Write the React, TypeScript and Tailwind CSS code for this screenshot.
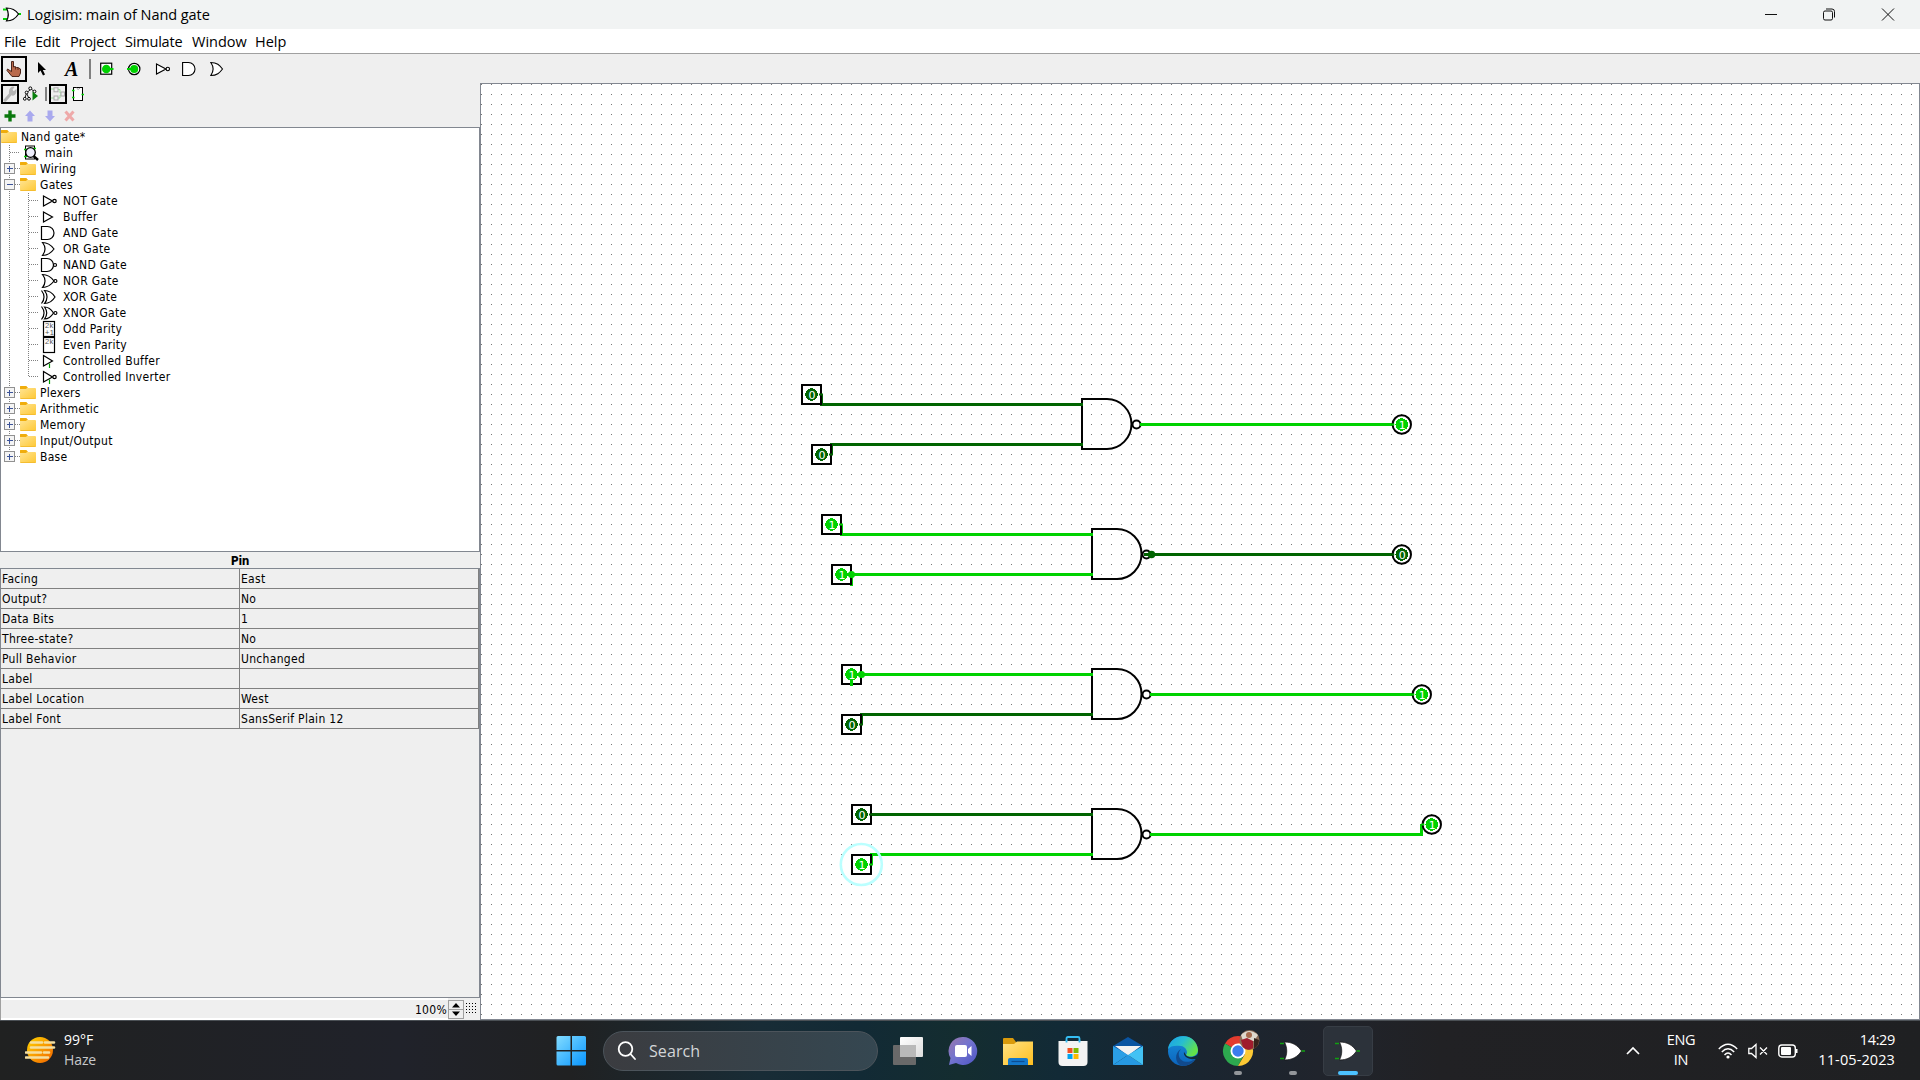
import React from "react";

const ON = "#00d200";
const OFF = "#006400";

type GateKind = "not" | "buffer" | "and" | "or" | "nand" | "nor" | "xor" | "xnor" | "odd" | "even" | "cbuf" | "cinv";

/* Component glyphs, drawn on a 16x16 grid */
function GateIcon({ kind }: { kind: GateKind }) {
  const orBody = "M1.5 1.5 C7 1.5 10 4 13 8 C10 12 7 14.5 1.5 14.5 C5 10 5 6 1.5 1.5 Z";
  return (
    <svg className="h-4 w-4 shrink-0 overflow-visible" viewBox="0 0 16 16" fill="none" stroke="#000" strokeWidth="1.2">
      {kind === "not" && (
        <>
          <path d="M2.5 3 L11.5 8 L2.5 13 Z" />
          <circle cx="13.5" cy="8" r="1.7" />
        </>
      )}
      {kind === "buffer" && <path d="M2.5 3 L11.5 8 L2.5 13 Z" />}
      {kind === "and" && <path d="M.5 1.5 H6.5 A6.5 6.5 0 0 1 6.5 14.5 H.5 Z" />}
      {kind === "or" && <path d={orBody} />}
      {kind === "nand" && (
        <>
          <path d="M.5 1.5 H6 A6.5 6.5 0 0 1 6 14.5 H.5 Z" />
          <circle cx="14" cy="8" r="1.5" />
        </>
      )}
      {kind === "nor" && (
        <>
          <path d={orBody} />
          <circle cx="14.4" cy="8" r="1.5" />
        </>
      )}
      {kind === "xor" && (
        <>
          <path d="M3.5 1.5 C9 1.5 11.5 4 14 8 C11.5 12 9 14.5 3.5 14.5 C7 10 7 6 3.5 1.5 Z" />
          <path d="M.5 1.5 C4 6 4 10 .5 14.5" />
        </>
      )}
      {kind === "xnor" && (
        <>
          <path d="M3.5 2 C8 2 10 4 12.5 8 C10 12 8 14 3.5 14 C6.5 10 6.5 6 3.5 2 Z" />
          <path d="M.5 1.5 C4 6 4 10 .5 14.5" />
          <circle cx="14.4" cy="8" r="1.5" />
        </>
      )}
      {(kind === "odd" || kind === "even") && (
        <>
          <rect x="2.5" y=".5" width="11" height="15" />
          <text x="4" y="7" fontSize="7.5" fill="#555" stroke="none" fontFamily="Liberation Sans, sans-serif">2k</text>
          {kind === "odd" && (
            <text x="4" y="14" fontSize="7.5" fill="#555" stroke="none" fontFamily="Liberation Sans, sans-serif">+1</text>
          )}
        </>
      )}
      {(kind === "cbuf" || kind === "cinv") && (
        <>
          <path d="M2.5 2.5 L11.5 8 L2.5 13 Z" />
          <path d="M8.5 10.5 V15" stroke="#00a000" />
          {kind === "cinv" && <circle cx="13.5" cy="8" r="1.7" />}
        </>
      )}
    </svg>
  );
}

function Folder() {
  return (
    <svg className="h-4 w-4 shrink-0" viewBox="0 0 16 16">
      <defs>
        <linearGradient id="folder" x1="0" y1="0" x2="1" y2="1">
          <stop offset="0" stopColor="#ffe493" />
          <stop offset="1" stopColor="#fec834" />
        </linearGradient>
      </defs>
      <path d="M0 2 Q0 1 1 1 H6 L8 3 V6 H0Z" fill="#f0ad0c" />
      <rect x="0" y="3" width="16" height="11" rx="1" fill="url(#folder)" />
      <path d="M0 4 V2 Q0 1 1 1 H6 L7.5 2.6 L6 4Z" fill="#f0ad0c" />
      <path d="M.5 13.5 H15.5" stroke="#f5bd30" />
    </svg>
  );
}

function Expander({ open, last }: { open?: boolean; last?: boolean }) {
  return (
    <svg className="h-4 w-5 shrink-0" viewBox="0 0 20 16" shapeRendering="crispEdges">
      <path d={last ? "M9.5 0 V8" : "M9.5 0 V16"} stroke="#808080" strokeDasharray="1 1" />
      <path d="M15 7.5 H20" stroke="#808080" strokeDasharray="1 1" />
      <rect x="4.5" y="2.5" width="10" height="10" fill="#f4f4f4" stroke="#919191" />
      <path d="M7 7.5 H13" stroke="#3b5399" />
      {!open && <path d="M9.5 4.5 V10.5" stroke="#3b5399" />}
    </svg>
  );
}

function ChildGuide({ last }: { last?: boolean }) {
  return (
    <svg className="h-4 w-[41px] shrink-0" viewBox="0 0 41 16" shapeRendering="crispEdges" stroke="#808080" strokeDasharray="1 1">
      <path d="M9.5 0 V16" />
      <path d={last ? "M28.5 0 V8" : "M28.5 0 V16"} />
      <path d="M29 7.5 H39" />
    </svg>
  );
}

const gates: [GateKind, string][] = [
  ["not", "NOT Gate"],
  ["buffer", "Buffer"],
  ["and", "AND Gate"],
  ["or", "OR Gate"],
  ["nand", "NAND Gate"],
  ["nor", "NOR Gate"],
  ["xor", "XOR Gate"],
  ["xnor", "XNOR Gate"],
  ["odd", "Odd Parity"],
  ["even", "Even Parity"],
  ["cbuf", "Controlled Buffer"],
  ["cinv", "Controlled Inverter"],
];

const ROW = "flex h-4 items-center leading-4 whitespace-nowrap";

function LibraryRow({ name, open, last }: { name: string; open?: boolean; last?: boolean }) {
  return (
    <div className={ROW}>
      <Expander open={open} last={last} />
      <Folder />
      <span className="ml-1">{name}</span>
    </div>
  );
}

function Explorer() {
  return (
    <div className="h-[425px] shrink-0 border border-[#828790] bg-white pt-px">
      <div className="-ml-px">
        <div className={ROW}>
          <span className="ml-px flex"><Folder /></span>
          <span className="ml-1">Nand gate*</span>
        </div>
        <div className={ROW}>
          <svg className="h-4 w-6 shrink-0" viewBox="0 0 24 16" shapeRendering="crispEdges" stroke="#808080" strokeDasharray="1 1">
            <path d="M9.5 0 V16 M10 7.5 H20" />
          </svg>
          <svg className="h-4 w-4 shrink-0" viewBox="0 0 16 16">
            <rect x="1.5" y="1" width="9" height="13" fill="#fff" stroke="#000" />
            <path d="M0 4.5 H3 M0 11.5 H3 M9 3.5 H12" stroke={ON} strokeWidth="1.5" />
            <circle cx="6.5" cy="7.5" r="4.8" fill="#eeeefc" stroke="#000" strokeWidth="1.3" />
            <path d="M9.5 11 L14 15" stroke="#000" strokeWidth="2.5" />
          </svg>
          <span className="ml-[5px]">main</span>
        </div>
        <LibraryRow name="Wiring" />
        <LibraryRow name="Gates" open />
        {gates.map(([kind, name], i) => (
          <div className={ROW} key={name}>
            <ChildGuide last={i === gates.length - 1} />
            <GateIcon kind={kind} />
            <span className="ml-1.5">{name}</span>
          </div>
        ))}
        <LibraryRow name="Plexers" />
        <LibraryRow name="Arithmetic" />
        <LibraryRow name="Memory" />
        <LibraryRow name="Input/Output" />
        <LibraryRow name="Base" last />
      </div>
    </div>
  );
}

const attributes = [
  ["Facing", "East"],
  ["Output?", "No"],
  ["Data Bits", "1"],
  ["Three-state?", "No"],
  ["Pull Behavior", "Unchanged"],
  ["Label", ""],
  ["Label Location", "West"],
  ["Label Font", "SansSerif Plain 12"],
];

function Attributes() {
  return (
    <>
      <div className="h-4 shrink-0 text-center text-[12px] leading-[18px] font-bold tracking-[-0.3px]">Pin</div>
      <div className="flex-1 border border-[#828790]">
        {attributes.map(([name, value]) => (
          <div className="flex h-5 w-[478px] border-r border-b border-[#808080] leading-5" key={name}>
            <div className="w-[239px] border-r border-[#808080] pl-px">{name}</div>
            <div className="pl-px">{value}</div>
          </div>
        ))}
      </div>
    </>
  );
}

function Toolbar() {
  return (
    <div className="flex h-[29px] shrink-0 items-center bg-[#efefef]">
      <div className="ml-px flex h-[26px] w-[26px] items-center justify-center border-2 border-black">
        <svg className="h-4 w-4" viewBox="0 0 16 16">
          <path d="M5.5 .5 H7.5 V6 L9 5.5 L10.5 6.5 L12 6.5 L14.5 8 V12 L13 15.5 H6 L1 9.5 L1.5 8 L5.5 10.5 Z" fill="#b9694b" stroke="#3d160c" strokeWidth=".9" />
          <path d="M9.5 6 V8.5 M12 7 V9" stroke="#3d160c" strokeWidth=".7" />
        </svg>
      </div>
      <svg className="ml-2.5 h-4 w-3" viewBox="0 0 12 16"><path d="M1 1 V12 L3.5 9.5 L6 14.5 L8 13.5 L5.8 9 H9Z" fill="#000" /></svg>
      <span className="ml-4 w-6 font-['Liberation_Serif',serif] text-[20px] leading-5 font-bold italic">A</span>
      <span className="h-5 w-0.5 bg-[#808080]" />
      <svg className="ml-[9px] h-4 w-4" viewBox="0 0 16 16">
        <rect x=".7" y="2.2" width="11" height="11" fill="#fff" stroke="#000" strokeWidth="1.2" />
        <circle cx="6.3" cy="8" r="4.3" fill={ON} /><path d="M10 8 H13.5" stroke={ON} strokeWidth="2" />
      </svg>
      <svg className="ml-[11px] h-4 w-4" viewBox="0 0 16 16">
        <circle cx="7.2" cy="8" r="5.7" fill="#fff" stroke="#000" strokeWidth="1.2" />
        <circle cx="7.2" cy="8" r="4" fill={ON} /><path d="M0 8 H4" stroke={ON} strokeWidth="2" />
      </svg>
      <svg className="ml-3 h-4 w-4" viewBox="0 0 16 16" fill="#fff" stroke="#000" strokeWidth="1.1"><path d="M1.5 3 L11 8 L1.5 13Z" /><circle cx="12.8" cy="8" r="1.7" /></svg>
      <svg className="ml-[11px] h-4 w-4" viewBox="0 0 16 16" fill="#fff" stroke="#000" strokeWidth="1.1"><path d="M.6 1.5 H6.5 A6.5 6.5 0 0 1 6.5 14.5 H.6Z" /></svg>
      <svg className="ml-3 h-4 w-4" viewBox="0 0 16 16" fill="#fff" stroke="#000" strokeWidth="1.1"><path d="M.8 1.5 C7 1.5 9.5 4 12.5 8 C9.5 12 7 14.5 .8 14.5 C4 10 4 6 .8 1.5Z" /></svg>
    </div>
  );
}

function ExplorerTools() {
  return (
    <div className="flex h-[44px] shrink-0 flex-col">
      <div className="flex h-[22px] items-center">
        <div className="ml-px flex h-5 w-[18px] items-center justify-center border-2 border-black">
          <svg className="h-4 w-3.5 shrink-0" viewBox="0 0 14 14" preserveAspectRatio="none"><path d="M.5 12 L6 6.5 Q5.5 3 7.5 1.5 Q9.5 0 11.5 .8 L9.5 3.2 L10.8 4.7 L13.3 2.7 Q14 6 12 7.7 Q10 9 8.5 8.2 L3 13.5 Q.5 14.5 .5 12Z" fill="#b4b4b4" /></svg>
        </div>
        <svg className="ml-1 h-4 w-4" viewBox="0 0 16 16" fill="#fff" stroke="#000">
          <path d="M8 3 L3.5 7 L1.8 12.5 M3.5 7 L6 12.5 M8 3 L12 6" strokeWidth=".9" />
          <circle cx="7.3" cy="2.4" r="1.5" /><circle cx="3.6" cy="6.5" r="1.4" /><circle cx="1.8" cy="12.8" r="1.4" /><circle cx="6" cy="12.8" r="1.4" /><circle cx="11.5" cy="5.5" r="1.4" />
          <path d="M9.5 5.5 L15 10 L9.5 14.5Z" fill="#08800c" stroke="none" />
        </svg>
        <span className="ml-[6px] h-3.5 w-0.5 bg-[#808080]" />
        <div className="ml-0.5 flex h-5 w-[18px] items-center justify-center border-2 border-black">
          <svg className="h-3.5 w-3.5 shrink-0" viewBox="0 0 14 14" fill="none" stroke="#aaa">
            <path d="M0 2 H3 M0 11 H3 M7 2.5 H9 V6 H10 M7 11 H9 V8 H10" stroke="#9bdc9b" />
            <rect x="3" y=".8" width="4" height="4" /><rect x="3" y="9" width="4" height="4" /><rect x="10" y="5" width="3.5" height="4" />
          </svg>
        </div>
        <svg className="ml-1 h-4 w-4" viewBox="0 0 16 16">
          <rect x="2.5" y="1.5" width="9" height="13" fill="#fff" stroke="#000" />
          <path d="M5.5 2 Q7 5 9 2" fill="none" stroke="#999" />
          <path d="M1 4.5 H3.5 M1 11.5 H3.5 M10.5 8.5 H13" stroke={ON} strokeWidth="1.6" />
        </svg>
      </div>
      <div className="flex h-[22px] items-center">
        <svg className="ml-1 h-3 w-3" viewBox="0 0 12 12"><path d="M4.3 .5 H7.7 V4.3 H11.5 V7.7 H7.7 V11.5 H4.3 V7.7 H.5 V4.3 H4.3Z" fill="#0a780d" /></svg>
        <svg className="ml-2 h-3 w-3" viewBox="0 0 12 12"><path d="M6 .5 L11 6 H8.5 V11.5 H3.5 V6 H1Z" fill="#a9a9ee" /></svg>
        <svg className="ml-2 h-3 w-3" viewBox="0 0 12 12"><path d="M6 11.5 L11 6 H8.5 V.5 H3.5 V6 H1Z" fill="#a9a9ee" /></svg>
        <svg className="ml-2 h-3 w-3" viewBox="0 0 12 12"><path d="M1.5 1.5 L9.5 10.5 M9.5 1.5 L1.5 10.5" stroke="#eea9a9" strokeWidth="3" /></svg>
      </div>
    </div>
  );
}

function Value({ x, y, on }: { x: number; y: number; on: boolean }) {
  return (
    <>
      <circle cx={x} cy={y} r="6.3" fill={on ? ON : OFF} shapeRendering="crispEdges" />
      <text x={x + 0.5} y={y + 4.6} textAnchor="middle" fontSize="11" fill="#fff" fontFamily="DejaVu Sans, sans-serif">
        {on ? "1" : "0"}
      </text>
    </>
  );
}

function InputPin({ x, y, on }: { x: number; y: number; on: boolean }) {
  return (
    <g>
      <rect x={x - 9.5} y={y - 9.5} width="19" height="19" fill="none" stroke="#000" strokeWidth="2" shapeRendering="crispEdges" />
      <Value x={x} y={y} on={on} />
      <rect x={x + 7.5} y={y - 1} width="4" height="2" fill={on ? ON : OFF} />
    </g>
  );
}

function OutputPin({ x, y, on }: { x: number; y: number; on: boolean }) {
  return (
    <g>
      <circle cx={x} cy={y} r="9.2" fill="#fff" stroke="#000" strokeWidth="2" />
      <Value x={x} y={y} on={on} />
      <rect x={x - 10.5} y={y - 1} width="3" height="2" fill={on ? ON : OFF} />
    </g>
  );
}

function Nand({ x, y }: { x: number; y: number }) {
  return (
    <g fill="none" stroke="#000" strokeWidth="2">
      <path d={`M${x} ${y - 25} h25 a24.5 25 0 0 1 0 50 h-25 Z`} />
      <circle cx={x + 54.5} cy={y + 0.5} r="4" />
    </g>
  );
}

function Wire({ d, on }: { d: string; on: boolean }) {
  return <path d={d} fill="none" stroke={on ? ON : OFF} strokeWidth="3" shapeRendering="crispEdges" />;
}

/* Schematic canvas; the view box starts at the canvas's place in the window (481, 84) */
function Canvas() {
  return (
    <svg className="block h-full w-full bg-white" viewBox="481 84 1438 935">
      <defs>
        <pattern id="grid" x="481" y="84" width="10" height="10" patternUnits="userSpaceOnUse">
          <rect width="1" height="1" fill="#777" />
        </pattern>
      </defs>
      <rect x="481" y="84" width="1438" height="935" fill="url(#grid)" shapeRendering="crispEdges" />

      <Nand x={1082} y={424} />
      <Nand x={1092} y={554} />
      <Nand x={1092} y={694} />
      <Nand x={1092} y={834} />

      <Wire d="M821.5 394 V404.5 H1083" on={false} />
      <Wire d="M831.5 455 V444.5 H1083" on={false} />
      <Wire d="M1140 424.5 H1392" on />
      <Wire d="M841.5 524 V534.5 H1093" on />
      <Wire d="M847 574.5 H1093 M851.5 575 V586" on />
      <Wire d="M1144 554.5 H1392" on={false} />
      <Wire d="M857 674.5 H1093" on />
      <Wire d="M861.5 725 V714.5 H1093" on={false} />
      <Wire d="M1150 694.5 H1412" on />
      <Wire d="M870 814.5 H1093" on={false} />
      <Wire d="M871.5 865 V854.5 H1093" on />
      <Wire d="M1150 834.5 H1421.5 V824" on />

      <InputPin x={811.5} y={394.5} on={false} />
      <InputPin x={821.5} y={454.5} on={false} />
      <InputPin x={831.5} y={524.5} on />
      <InputPin x={841.5} y={574.5} on />
      <InputPin x={851.5} y={674.5} on />
      <InputPin x={851.5} y={724.5} on={false} />
      <InputPin x={861.5} y={814.5} on={false} />
      <InputPin x={861.5} y={864.5} on />

      <Wire d="M851.5 680 V686" on />
      <circle cx="851.5" cy="574.5" r="3.5" fill={ON} />
      <circle cx="861.5" cy="674.5" r="3.5" fill={ON} />
      <circle cx="1151.5" cy="554.5" r="3.8" fill={OFF} />

      <OutputPin x={1401.8} y={424.5} on />
      <OutputPin x={1401.8} y={554.5} on={false} />
      <OutputPin x={1421.8} y={694.5} on />
      <OutputPin x={1431.8} y={824.5} on />
      <circle cx="861.3" cy="864.5" r="20.5" fill="none" stroke="#bff" strokeWidth="2.6" />
    </svg>
  );
}

function LogisimTaskIcon() {
  return (
    <svg className="h-7 w-7" viewBox="0 0 28 28">
      <path d="M1 6.5 H5 M1 21.5 H5 M22 14 H26" stroke="#11a011" strokeWidth="1.5" />
      <path d="M5.5 5 C13 5 18.5 8 22.5 14 C18.5 20 13 23 5.5 23 C8.5 17 8.5 11 5.5 5Z" fill="#fff" stroke="#111" strokeWidth=".7" />
    </svg>
  );
}

function TaskButton({ children, state }: { children: React.ReactNode; state?: "running" | "active" }) {
  return (
    <div
      className={
        state === "active"
          ? "relative flex h-[50px] w-[50px] items-center justify-center rounded-[5px] border border-[#373d45] bg-[#2c323a]"
          : "relative flex h-[50px] w-[50px] items-center justify-center"
      }
    >
      {children}
      {state === "running" && <span className="absolute bottom-px left-[21px] h-1 w-2 rounded-full bg-[#93969a]" />}
      {state === "active" && <span className="absolute bottom-0 left-3.5 h-1 w-5 rounded-full bg-[#4cc2ff]" />}
    </div>
  );
}

function Taskbar() {
  return (
    <footer className="flex h-[60px] shrink-0 items-center border-t border-[#4b5055] bg-[linear-gradient(90deg,#202121_0px,#20222a_400px,#202122_570px,#182c36_760px,#122a35_860px,#142d30_960px,#122a36_1060px,#1a2530_1200px,#20242c_1320px,#212124_1440px,#1f2022_1920px)] font-['Open_Sans',sans-serif] text-white">
      <div className="ml-[25px] flex w-[531px] items-center">
        <svg className="h-[30px] w-[31px]" viewBox="0 0 31 30">
          <defs><linearGradient id="sun" x1="0" y1="0" x2="1" y2="1"><stop offset="0" stopColor="#ffd500" /><stop offset="1" stopColor="#f26200" /></linearGradient></defs>
          <circle cx="15" cy="14" r="13" fill="url(#sun)" />
          <path d="M6 6.5 H17 M20 6.5 H29 M6 11.5 H29 M1 16.5 H16 M19 16.5 H24 M1 21.5 H23" stroke="#f5dfa0" strokeWidth="2.6" strokeLinecap="round" />
        </svg>
        <div className="ml-2 pb-0.5 text-[14px] leading-5">
          <div>99°F</div>
          <div className="tracking-[-0.1px] text-[#c6c8ca]">Haze</div>
        </div>
      </div>
      <svg className="h-[30px] w-[30px]" viewBox="0 0 30 30">
        <defs><linearGradient id="win" x1="0" y1="0" x2="1" y2="1"><stop offset="0" stopColor="#83dcff" /><stop offset="1" stopColor="#0795ff" /></linearGradient></defs>
        <path d="M2 0 H14.5 V14 H.5 V1.5Q.5 0 2 0Z M16 0 H28.5 Q30 0 30 1.5 V14 H16Z M.5 15.500 H14.500 V29.500 H2 Q.5 29.500 .5 28Z M16 15.500 H30 V28 Q30 29.500 28.500 29.500 H16Z" fill="url(#win)" />
      </svg>
      <div className="ml-[17px] flex h-10 w-[275px] items-center rounded-full border border-[#4c545b] bg-[linear-gradient(90deg,#3b3c40,#354751)] pl-[13px]">
        <svg className="h-5 w-5" viewBox="0 0 20 20" fill="none" stroke="#fff" strokeWidth="1.8" strokeLinecap="round"><circle cx="8.5" cy="8" r="6.8" /><path d="M13.5 13 L18 18" /></svg>
        <span className="ml-3 text-[16px] tracking-[0.1px] text-[#d3d6d8]">Search</span>
      </div>
      <div className="ml-[5px] flex gap-[5px]">
        <TaskButton>
          <svg className="h-[30px] w-[30px]" viewBox="0 0 30 30">
            <defs><linearGradient id="tv" x1="0" y1="0" x2="1" y2="1"><stop offset="0" stopColor="#fff" /><stop offset="1" stopColor="#ddd" /></linearGradient></defs>
            <rect x="0" y="9" width="23" height="20" rx="1" fill="#696969" /><rect x="7" y="1" width="23" height="20" rx="1" fill="url(#tv)" /><rect x="7" y="9" width="16" height="12" fill="#b9b9b9" />
          </svg>
        </TaskButton>
        <TaskButton>
          <svg className="h-[30px] w-[30px]" viewBox="0 0 30 30">
            <defs><linearGradient id="chat" x1="0" y1="0" x2="1" y2="1"><stop offset="0" stopColor="#9a77a9" /><stop offset=".45" stopColor="#7474cf" /><stop offset="1" stopColor="#4d55c5" /></linearGradient></defs>
            <path d="M15 1 A14 14 0 1 1 8 27 L1 29 L2.5 22 A14 14 0 0 1 15 1Z" fill="url(#chat)" />
            <rect x="7" y="9" width="12" height="12" rx="2" fill="#fff" /><path d="M20 13 L23.5 10 V20 L20 17Z" fill="#fff" />
          </svg>
        </TaskButton>
        <TaskButton>
          <svg className="h-[30px] w-[30px]" viewBox="0 0 30 30">
            <defs><linearGradient id="expl" x1="0" y1="0" x2="1" y2="1"><stop offset="0" stopColor="#ffe283" /><stop offset="1" stopColor="#ffbf20" /></linearGradient></defs>
            <path d="M0 3 Q0 2 1 2 H10 L13 6 V10 H0Z" fill="#d99a0b" /><path d="M0 8 H11 L14 5.5 H30 V29 H0Z" fill="url(#expl)" />
            <path d="M5 29 V23.5 Q5 22 7 22 H23 Q25 22 25 23.5 V29Z" fill="#1478cc" /><path d="M8.5 25.5 H21.5" stroke="#0c4d93" strokeWidth="1.2" />
          </svg>
        </TaskButton>
        <TaskButton>
          <svg className="h-[32px] w-[30px]" viewBox="0 0 30 32">
            <path d="M8.5 8 V3.5 Q8.5 2 10 2 H20 Q21.5 2 21.5 3.5 V8" fill="none" stroke="#35bdf2" strokeWidth="1.8" />
            <path d="M0.5 6 H29.5 V27 Q29.5 31 25.5 31 H4.5 Q.5 31 .5 27Z" fill="#f3f3f3" />
            <path d="M8.5 5.5 V7.5 M21.5 5.5 V7.5" stroke="#35bdf2" strokeWidth="1.8" />
            <path d="M9.5 13 H14.5 V18 H9.5Z" fill="#f25022" /><path d="M15.5 13 H20.5 V18 H15.5Z" fill="#7fba00" /><path d="M9.5 19 H14.5 V24 H9.5Z" fill="#00a4ef" /><path d="M15.5 19 H20.5 V24 H15.5Z" fill="#ffb900" />
          </svg>
        </TaskButton>
        <TaskButton>
          <svg className="h-[30px] w-[30px]" viewBox="0 0 30 30">
            <path d="M0 10 L15 1 L30 10 V20 H0Z" fill="#0a55a2" /><path d="M2 10 H28 L15 19.5Z" fill="#f2f2f2" />
            <path d="M0 10 L15 19 L0 29Z" fill="#2b9fe6" /><path d="M15 19 L30 29 H0Z" fill="#2699e3" />
            <path d="M30 10 V29 L15 19Z" fill="#43c2f4" />
          </svg>
        </TaskButton>
        <TaskButton>
          <svg className="h-[32px] w-[32px]" viewBox="0 0 32 32">
            <defs>
              <linearGradient id="edgeTop" x1="0" y1="0" x2="1" y2=".5"><stop offset="0" stopColor="#1aa0e8" /><stop offset=".5" stopColor="#27bdd0" /><stop offset="1" stopColor="#63e34a" /></linearGradient>
              <linearGradient id="edgeSide" x1="0" y1="0" x2="0" y2="1"><stop offset="0" stopColor="#178fdc" /><stop offset="1" stopColor="#0c63bb" /></linearGradient>
            </defs>
            <circle cx="16" cy="16" r="15" fill="url(#edgeSide)" />
            <path d="M12 17 C10 26 20 30 28 24 C24 30 18 32 14 30.5 C8 28 7 18 14 14Z" fill="#114a8d" />
            <path d="M1 14 C3 -2 29 -4 31 15 C31 22 22 23 19 20 C21 18 20 12 14 11 C8 10 3 11 1 14Z" fill="url(#edgeTop)" />
            <path d="M19 20 C21 23 27 23 31 19 L32 24 L28 24 C21 25 16 21 17 17Z" fill="#122c38" />
          </svg>
        </TaskButton>
        <TaskButton state="running">
          <svg className="h-[40px] w-[44px] shrink-0 overflow-visible" viewBox="0 0 44 40">
            <path d="M22 20 L9 12.5 A15 15 0 0 1 35 12.5Z" fill="#e33b2e" />
            <path d="M22 20 L9 12.5 A15 15 0 0 0 22 35 L29 22Z" fill="#2da94f" />
            <path d="M22 12.5 H35 A15 15 0 0 1 22 35 L29 23Z" fill="#fcc934" />
            <circle cx="22" cy="20" r="7.5" fill="#fff" /><circle cx="22" cy="20" r="5.7" fill="#3b7ded" />
            <circle cx="33.5" cy="9" r="10" fill="#8a6a55" />
            <path d="M25 4 Q33 -4 42 4 L38 10 H27Z" fill="#ded8cd" /><path d="M25 9 L31 7 L37 10 V17 Q31 21 27 16Z" fill="#9f1c2d" /><circle cx="33" cy="4" r="3" fill="#a66a4c" /><path d="M38 7 L43 9 Q43 15 38 18Z" fill="#34221c" />
          </svg>
        </TaskButton>
        <TaskButton state="running"><LogisimTaskIcon /></TaskButton>
        <TaskButton state="active"><LogisimTaskIcon /></TaskButton>
      </div>
      <div className="mr-[25px] ml-auto flex items-center">
        <svg className="h-4 w-4" viewBox="0 0 16 16" fill="none" stroke="#fff" strokeWidth="1.7"><path d="M2 11 L8 5 L14 11" /></svg>
        <div className="ml-[22px] w-[36px] pb-0.5 text-center text-[14.5px] leading-5 tracking-[-0.3px]">
          <div>ENG</div>
          <div>IN</div>
        </div>
        <svg className="ml-[19px] h-5 w-5" viewBox="0 0 20 20" fill="none" stroke="#fff" strokeWidth="1.4">
          <path d="M.8 8 Q10 -1.5 19.2 8 M3.8 11 Q10 4.5 16.2 11 M6.5 14 Q10 10 13.5 14" /><circle cx="10" cy="16" r="1.6" fill="#fff" stroke="none" />
        </svg>
        <svg className="ml-2.5 h-5 w-5" viewBox="0 0 20 20" fill="none" stroke="#fff" strokeWidth="1.3"><path d="M.8 7.5 H3.5 L8 3.5 V16.5 L3.5 12.5 H.8Z M12 6.5 L19 13.5 M19 6.5 L12 13.5" /></svg>
        <svg className="ml-2.5 h-5 w-5" viewBox="0 0 20 20"><rect x=".8" y="4" width="16.5" height="12" rx="3" fill="none" stroke="#fff" strokeWidth="1.4" /><rect x="3" y="6" width="10" height="8" rx="1" fill="#fff" /><path d="M18.5 8 V12" stroke="#fff" strokeWidth="2" /></svg>
        <div className="ml-[17px] w-20 pb-0.5 text-right text-[14.5px] leading-5 whitespace-nowrap">
          <div className="tracking-[-0.35px]">14:29</div>
          <div className="tracking-[0.1px]">11-05-2023</div>
        </div>
      </div>
    </footer>
  );
}

export default function App() {
  return (
    <div className="flex h-[1080px] w-[1920px] flex-col overflow-hidden bg-[#efefef] text-black">
      <header className="flex h-[29px] shrink-0 items-center bg-[#f1f3f3] font-['Open_Sans',sans-serif] text-[14.5px]">
        <svg className="ml-[3px] h-4 w-[18px]" viewBox="0 0 18 16">
          <path d="M0 2.5 H4 M0 12 H4 M15 7 H18" stroke={ON} strokeWidth="2" />
          <path d="M3.5 1 C9 1 13 3.5 15.5 7 C13 11 9 14 3.5 14 C6 9.5 6 5.5 3.5 1Z" fill="#fff" stroke="#000" strokeWidth="1.2" />
        </svg>
        <span className="ml-1.5 tracking-[-0.06px]">Logisim: main of Nand gate</span>
        <svg className="ml-auto h-4 w-4" viewBox="0 0 16 16" stroke="#111"><path d="M2 7.5 H14" /></svg>
        <svg className="ml-[42px] h-4 w-4" viewBox="0 0 16 16" fill="none" stroke="#111"><rect x="2.5" y="4" width="9" height="9" rx="1.5" /><path d="M5 2 H11 Q13.5 2 13.5 4.5 V10.5" /></svg>
        <svg className="mr-6 ml-[43px] h-4 w-4" viewBox="0 0 16 16" fill="none" stroke="#111"><path d="M2 1.5 L14 13.5 M14 1.5 L2 13.5" /></svg>
      </header>
      <nav className="flex h-[25px] shrink-0 items-center border-b border-[#a0a0a0] bg-white pt-px pl-1 font-['Open_Sans',sans-serif] text-[14.5px] tracking-[-0.2px]">
        <span className="w-[31px]">File</span>
        <span className="w-[35px]">Edit</span>
        <span className="w-[55px]">Project</span>
        <span className="w-[67px]">Simulate</span>
        <span className="w-[63px] tracking-normal">Window</span>
        <span className="tracking-normal">Help</span>
      </nav>
      <Toolbar />
      <main className="flex min-h-0 flex-1">
        <aside className="flex w-[480px] shrink-0 flex-col font-['DejaVu_Sans_Condensed','DejaVu_Sans',sans-serif] text-[12px] tracking-[0.3px] [font-stretch:condensed]">
          <ExplorerTools />
          <Explorer />
          <Attributes />
          <div className="flex h-[22px] shrink-0 items-center border-l border-[#a0a0a0]">
            <div className="flex h-full flex-1 items-center justify-end border-y-2 border-white pt-px pr-px">100%</div>
            <div className="flex h-[19px] w-4 flex-col border border-[#a0a0a0]">
              <svg className="h-[17px] w-3.5" viewBox="0 0 14 17"><path d="M7 2 L11 6.5 H3Z M7 15 L11 10.5 H3Z" fill="#000" /><path d="M0 8.5 H14" stroke="#a0a0a0" /></svg>
            </div>
            <svg className="mr-0.5 ml-0.5 h-3 w-3" viewBox="0 0 12 12" shapeRendering="crispEdges">
              <defs><pattern id="grip" width="3" height="3" patternUnits="userSpaceOnUse"><rect width="1" height="1" fill="#000" /></pattern></defs>
              <rect width="12" height="12" fill="url(#grip)" />
            </svg>
          </div>
        </aside>
        <div className="min-w-0 flex-1 border border-[#828790]">
          <Canvas />
        </div>
      </main>
      <Taskbar />
    </div>
  );
}
